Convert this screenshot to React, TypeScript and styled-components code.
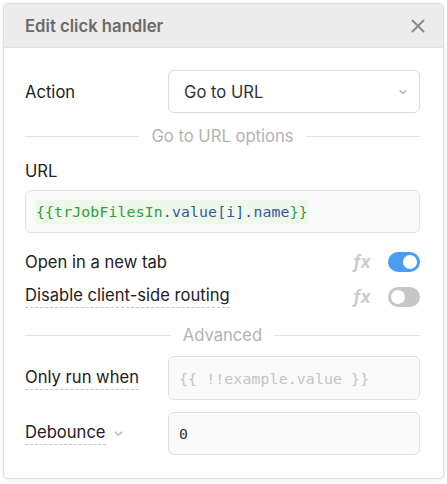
import React from 'react';
import styled, { createGlobalStyle } from 'styled-components';

const GlobalStyle = createGlobalStyle`
  html, body {
    margin: 0;
    padding: 0;
    background: #ffffff;
  }
  body {
    font-family: Inter, 'Noto Sans', sans-serif;
    color: #222;
  }
`;

const Page = styled.div`
  width: 447px;
  height: 484px;
  padding: 3px 3px 0 3px;
  box-sizing: border-box;
  background: #fff;
`;

const Modal = styled.div`
  width: 441px;
  height: 476px;
  box-sizing: border-box;
  border: 1px solid #dedede;
  border-radius: 5px;
  background: #fff;
  box-shadow: 0 1px 4px rgba(0, 0, 0, 0.08);
  display: flex;
  flex-direction: column;
  overflow: hidden;
`;

const Header = styled.div`
  height: 43px;
  flex: none;
  background: #ececec;
  border-bottom: 1px solid #e0e0e0;
  display: flex;
  align-items: center;
  justify-content: space-between;
  padding: 0 17px 0 21px;
`;

const Title = styled.div`
  font-size: 16.7px;
  font-weight: 600;
  color: #6a6a6a;
`;

const CloseButton = styled.button`
  border: none;
  background: none;
  padding: 0;
  width: 16px;
  height: 16px;
  display: flex;
  align-items: center;
  justify-content: center;
  cursor: pointer;
`;

const Body = styled.div`
  padding: 22px 23px 0 21px;
  display: flex;
  flex-direction: column;
  font-size: 16.6px;
`;

const FieldRow = styled.div<{ mt?: number }>`
  display: grid;
  grid-template-columns: 143px 1fr;
  align-items: center;
  margin-top: ${(p) => p.mt ?? 0}px;
`;

const Label = styled.span<{ dashed?: boolean }>`
  color: #222;
  justify-self: start;
  display: inline-flex;
  align-items: center;
  padding-bottom: ${(p) => (p.dashed ? '2px' : '0')};
  border-bottom: ${(p) => (p.dashed ? '1.5px dashed #c6c6c6' : 'none')};
`;

const LabelWrap = styled.div`
  display: flex;
  align-items: center;
  gap: 7px;
`;

const Select = styled.div`
  height: 43px;
  box-sizing: border-box;
  border: 1px solid #dcdcdc;
  border-radius: 6px;
  background: #fff;
  display: flex;
  align-items: center;
  justify-content: space-between;
  padding: 0 11px 0 15px;
  color: #333;
`;

const Divider = styled.div<{ mt: number }>`
  display: flex;
  align-items: center;
  gap: 12px;
  margin-top: ${(p) => p.mt}px;
  color: #b3b3b3;
  &::before,
  &::after {
    content: '';
    flex: 1;
    height: 1px;
    background: #e4e4e4;
  }
`;

const BlockLabel = styled.div<{ mt: number }>`
  color: #222;
  margin-top: ${(p) => p.mt}px;
`;

const CodeInput = styled.div<{ mt?: number; placeholder?: boolean }>`
  height: ${(p) => (p.placeholder ? 44 : 43)}px;
  box-sizing: border-box;
  border: 1px solid #e1e1e1;
  border-radius: 6px;
  background: #fafafa;
  display: flex;
  align-items: center;
  padding: 0 10px;
  margin-top: ${(p) => p.mt ?? 0}px;
  font-family: 'DejaVu Sans Mono', 'Liberation Mono', monospace;
  font-size: 14.8px;
  letter-spacing: 0.15px;
  color: ${(p) => (p.placeholder ? '#c4c4c4' : '#333')};
`;

const Highlight = styled.span`
  background: #eef9ec;
  padding: 3px 0 4px;
`;

const Token = styled.span<{ kind: 'green' | 'blue' }>`
  color: ${(p) => (p.kind === 'green' ? '#2f9e37' : '#33589a')};
`;

const ToggleRow = styled.div<{ mt: number }>`
  display: flex;
  align-items: center;
  justify-content: space-between;
  margin-top: ${(p) => p.mt}px;
`;

const ToggleSide = styled.div`
  display: flex;
  align-items: center;
  gap: 17px;
`;

const Fx = styled.span`
  font-family: Inter, 'DejaVu Sans', sans-serif;
  font-style: italic;
  font-weight: 700;
  font-size: 17px;
  color: #cbcbcb;
  letter-spacing: 0.3px;
`;

const Toggle = styled.div<{ on: boolean }>`
  width: 32px;
  height: 20px;
  border-radius: 10px;
  background: ${(p) => (p.on ? '#4a9df2' : '#c6c6c6')};
  position: relative;
  &::after {
    content: '';
    position: absolute;
    top: 3px;
    left: ${(p) => (p.on ? '15px' : '3px')};
    width: 14px;
    height: 14px;
    border-radius: 50%;
    background: #fff;
  }
`;

const Chevron = ({ size = 10, color = '#b5b5b5' }: { size?: number; color?: string }) => (
  <svg width={size} height={size} viewBox="0 0 10 10">
    <path d="M2 3.8 L5 6.6 L8 3.8" fill="none" stroke={color} strokeWidth="1.4" strokeLinecap="round" strokeLinejoin="round" />
  </svg>
);

const App = () => {
  return (
    <>
      <GlobalStyle />
      <Page>
        <Modal>
          <Header>
            <Title>Edit click handler</Title>
            <CloseButton aria-label="Close">
              <svg width="14" height="14" viewBox="0 0 14 14">
                <path d="M1.5 1.5 L12.5 12.5 M12.5 1.5 L1.5 12.5" stroke="#8a8a8a" strokeWidth="2" strokeLinecap="round" />
              </svg>
            </CloseButton>
          </Header>
          <Body>
            <FieldRow>
              <Label>Action</Label>
              <Select>
                <span>Go to URL</span>
                <Chevron />
              </Select>
            </FieldRow>

            <Divider mt={13}>Go to URL options</Divider>

            <BlockLabel mt={15}>URL</BlockLabel>
            <CodeInput mt={9}>
              <Highlight>
                <Token kind="green">{'{{trJobFilesIn'}</Token>
                <Token kind="blue">.value[i].name</Token>
                <Token kind="green">{'}}'}</Token>
              </Highlight>
            </CodeInput>

            <ToggleRow mt={19}>
              <Label>Open in a new tab</Label>
              <ToggleSide>
                <Fx>fx</Fx>
                <Toggle on />
              </ToggleSide>
            </ToggleRow>
            <ToggleRow mt={13}>
              <Label dashed>Disable client-side routing</Label>
              <ToggleSide>
                <Fx>fx</Fx>
                <Toggle on={false} />
              </ToggleSide>
            </ToggleRow>

            <Divider mt={17}>Advanced</Divider>

            <FieldRow mt={11}>
              <Label dashed>Only run when</Label>
              <CodeInput placeholder>{'{{ !!example.value }}'}</CodeInput>
            </FieldRow>
            <FieldRow mt={12}>
              <LabelWrap>
                <Label dashed>Debounce</Label>
                <Chevron size={11} color="#bdbdbd" />
              </LabelWrap>
              <CodeInput>0</CodeInput>
            </FieldRow>
          </Body>
        </Modal>
      </Page>
    </>
  );
};

export default App;
